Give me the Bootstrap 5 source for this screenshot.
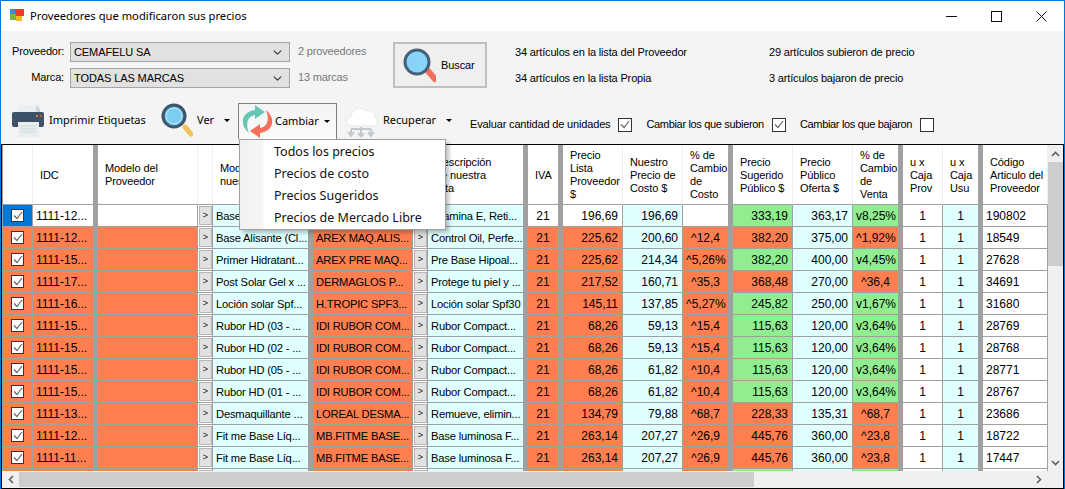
<!DOCTYPE html>
<html lang="es">
<head>
<meta charset="utf-8">
<title>Proveedores que modificaron sus precios</title>
<link rel="stylesheet" href="https://cdn.jsdelivr.net/npm/bootstrap@5.3.0/dist/css/bootstrap.min.css">
<style>
html,body{margin:0;width:1065px;height:489px;overflow:hidden;background:#f4f4f4}
body{font-family:"Liberation Sans",Arial,sans-serif;font-size:11px;letter-spacing:-.16px;color:#000;line-height:1.2}
.win{width:1065px;height:489px;border:1px solid #0078d7;border-bottom:0;position:relative;background:#f4f4f4}
.titlebar{height:30px;background:#fff;font-family:"Noto Sans",sans-serif;font-size:11.2px;letter-spacing:0}
.titlebar .ttl{margin-left:5px}
.appicon{margin-left:9px}
.capbtn{width:45px;height:30px}
.filters{height:57px;padding:11px 0 0 11px}
.lblcol{width:52px;text-align:right}
.frow{height:20px;margin-bottom:6px}
.form-select.cmb{width:220px;height:20px;min-height:0;margin-left:6px;padding:0 3px;font-size:11px;letter-spacing:-.1px;line-height:18px;color:#000;background-color:#e1e1e1;border:1px solid #a6a6a6;border-radius:0;background-position:right 6px center;background-size:11px 9px;font-family:"Liberation Sans",Arial,sans-serif}
.cnt{width:103px;padding-left:8px;color:#777}
.buscar{width:94px;height:46px;background:#efefef;border:2px solid #bfbfbf;border-radius:0;padding:0;font-size:11px;letter-spacing:-.1px;color:#000}
.buscar svg{margin-left:7px;margin-right:5px}
.stat1{width:254px;margin-left:28px}
.statline{height:26px;line-height:20px}
.tools{height:35px;margin-top:15px;font-family:"Noto Sans",sans-serif;font-size:11px;letter-spacing:0}
.titem{height:35px;padding-bottom:1px}
.ti-print{margin-left:11px;width:145px}
.ti-ver{width:77px;margin-left:4px}
.ti-cam{width:99px;background:linear-gradient(#f4f4f4,#fbfbfb);border:1px solid #808080;border-bottom:0;position:relative;z-index:1001;height:36px}
.ti-cam svg{margin-left:3px}
.ti-cam .lbl{margin-left:2px}
.ti-rec{width:115px;margin-left:8px}
.caret-d{width:0;height:0;border-left:3px solid transparent;border-right:3px solid transparent;border-top:3px solid #000;margin-left:auto}
.caret-e1{margin-right:6px}
.ti-chk{height:35px;padding-top:8px;margin-left:10px;font-family:"Liberation Sans",Arial,sans-serif;font-size:11px;letter-spacing:-.16px}
.ti-chk .chkbox{margin-left:8px;margin-right:14px}
.ti-chk .nar{letter-spacing:-.33px}
.chkbox{display:inline-flex;width:14px;height:14px;border:1px solid #333;background:#fff;align-items:center;justify-content:center;flex:none}
.frame{position:absolute;left:0;top:143px;width:1063px;height:345px;border:1px solid #000;background:#a0a0a0}
.gridrow{height:326px}
.gridwrap{width:1046px;height:326px;overflow:hidden;padding-left:1px;background:#a0a0a0}
.data-grid.table{width:1045px;table-layout:fixed;border-collapse:separate;border-spacing:0;font-size:12px;letter-spacing:0;margin:0}
.data-grid.table>:not(caption)>*>*{padding:1px 3px 0;border:0;border-right:1px solid #a0a0a0;border-bottom:1px solid #a0a0a0;height:22px;line-height:20px;white-space:nowrap;overflow:hidden;color:#000;background-color:#fff;box-shadow:none;vertical-align:middle}
.data-grid.table>thead>tr>th{height:60px;font-weight:400;font-size:11px;letter-spacing:-.1px;line-height:13px;white-space:nowrap;padding:1px 0 0 7px;border-right:1px solid #efefef;border-bottom:1px solid #a0a0a0}
.data-grid.table>thead>tr>th.sp,.data-grid.table>tbody>tr>td.sp{border-right:5px solid #a0a0a0}
.data-grid.table>tbody>tr>td.tx{font-size:11.2px;letter-spacing:-.18px}
.data-grid.table>tbody>tr>td.co{background-color:#ff7f50}
.data-grid.table>tbody>tr>td.cy{background-color:#e0ffff}
.data-grid.table>tbody>tr>td.gr{background-color:#90ee90}
.data-grid.table>tbody>tr>td.sel{background-color:#0078d7}
.data-grid.table>tbody>tr>td.pr{padding-right:4px}
.data-grid.table>tbody>tr>td.bt{padding:0 1px;background-color:#fff}
.data-grid.table>tbody>tr>td.ck{padding:0 0 0 8px}
.cellbtn{display:block;width:13px;height:19px;padding:0;border:1px solid #b5b5b5;background:#e1e1e1;font-size:9px;line-height:17px;color:#111;text-align:center}
.tick{display:flex;width:13px;height:13px;border:1px solid #333;background:#fff;align-items:center;justify-content:center}
.vscroll{width:15px;height:326px;background:#f0f0f0;position:relative}
.vscroll .up{height:17px}
.vscroll .thumb{height:104px;background:#cdcdcd}
.vscroll .sp-fill{height:188px}
.hscroll{height:17px;background:#f0f0f0;width:100%}
.hscroll .end{width:17px;height:17px}
.hscroll .thumb{width:735px;height:15px;background:#cdcdcd}
.dropdown-menu.ctx{left:238px;top:138px;width:207px;min-width:0;height:91px;padding:1px 0;margin:0;border:1px solid #a0a0a0;border-radius:0;background:linear-gradient(90deg,#f1f1f1 0,#f6f6f6 23px,#fff 24px);box-shadow:3px 3px 4px rgba(0,0,0,.25);font-family:"Noto Sans",sans-serif;color:#000;letter-spacing:0}
.dropdown-menu.ctx .dropdown-item{height:22px;line-height:22px;padding:0 0 0 34px;color:#111;font-size:12.5px}
</style>
</head>
<body>
<div class="win">
  <div class="titlebar d-flex align-items-center">
    <svg class="appicon" width="15" height="14" viewBox="0 0 15 14"><rect x="0" y="0" width="6" height="5" fill="#3d90cf"/><rect x="5" y="0" width="9" height="7" fill="#ea3b26"/><rect x="0" y="5" width="6" height="6" fill="#7db43c"/><rect x="6" y="7" width="6" height="5" fill="#f5b924"/></svg>
    <span class="ttl">Proveedores que modificaron sus precios</span>
    <div class="ms-auto d-flex">
      <div class="capbtn d-flex align-items-center justify-content-center"><svg width="11" height="11"><path d="M0 5.5H11" stroke="#111"/></svg></div>
      <div class="capbtn d-flex align-items-center justify-content-center"><svg width="11" height="11"><rect x=".5" y=".5" width="10" height="10" fill="none" stroke="#111"/></svg></div>
      <div class="capbtn d-flex align-items-center justify-content-center"><svg width="11" height="11"><path d="M.5 .5L10.5 10.5M10.5 .5L.5 10.5" stroke="#111"/></svg></div>
    </div>
  </div>

  <div class="filters d-flex align-items-start">
    <div>
      <div class="frow d-flex align-items-center">
        <div class="lblcol">Proveedor:</div>
        <select class="form-select cmb"><option>CEMAFELU SA</option></select>
        <div class="cnt">2 proveedores</div>
      </div>
      <div class="frow d-flex align-items-center">
        <div class="lblcol">Marca:</div>
        <select class="form-select cmb"><option>TODAS LAS MARCAS</option></select>
        <div class="cnt">13 marcas</div>
      </div>
    </div>
    <button class="btn buscar d-flex align-items-center" type="button">
      <svg width="34" height="36" viewBox="0 0 34 36"><path d="M26 24L33 32" stroke="#f0705a" stroke-width="6" stroke-linecap="round"/><circle cx="15" cy="15" r="12" fill="#87d4f8" stroke="#44607a" stroke-width="3"/></svg>
      <span>Buscar</span>
    </button>
    <div class="stat1">
      <div class="statline">34 artículos en la lista del Proveedor</div>
      <div class="statline">34 artículos en la lista Propia</div>
    </div>
    <div>
      <div class="statline">29 artículos subieron de precio</div>
      <div class="statline">3 artículos bajaron de precio</div>
    </div>
  </div>

  <div class="tools d-flex align-items-start">
    <div class="titem ti-print d-flex align-items-center">
      <svg width="33" height="33" viewBox="0 0 33 33"><rect x="6" y="1" width="22" height="12" fill="#eceff1"/><path d="M24 1L28 5V8H24Z" fill="#cfd5d9"/><rect x="0" y="8" width="32" height="15" rx="2" fill="#3d5266"/><circle cx="25" cy="12" r="1" fill="#e9a23b"/><circle cx="29" cy="12" r="1" fill="#e0573f"/><rect x="6" y="18" width="21" height="15" fill="#e8eef0"/><path d="M9 22H24M9 25H24M9 28H24" stroke="#ccd6da"/></svg>
      <span class="ms-1">Imprimir Etiquetas</span>
    </div>
    <div class="titem ti-ver d-flex align-items-center">
      <svg width="32" height="35" viewBox="0 0 32 35"><path d="M24 24L30 31" stroke="#f4c25c" stroke-width="5" stroke-linecap="round"/><circle cx="13" cy="13" r="11" fill="#5ab8ea" stroke="#3f5568" stroke-width="3"/><circle cx="13" cy="13" r="8" fill="#7ccdf2" stroke="#cfeaf7" stroke-width="1"/></svg>
      <span class="ms-1">Ver</span><span class="caret-d me-2"></span>
    </div>
    <div class="titem ti-cam d-flex align-items-center">
      <svg width="31" height="33" viewBox="0 0 31 33"><path d="M7 28C-3 20-1 7 13 5L13 0L23 7L13 14L13 10C6 11 3 18 7 28Z" fill="#66c7b5"/><path d="M7 28C-3 20-1 7 13 5L13 0L23 7L13 14L13 10C6 11 3 18 7 28Z" fill="#f2705c" transform="rotate(180 15.5 16.5)"/></svg>
      <span class="lbl">Cambiar</span><span class="caret-d caret-e1"></span>
    </div>
    <div class="titem ti-rec d-flex align-items-center">
      <svg width="34" height="33" viewBox="0 0 34 33"><path d="M7 22C0 22 0 13 6 12C7 5 16 1 21 7C28 5 31 10 29 13C34 14 33 22 28 22Z" fill="#fff" stroke="#e6e8ea"/><path d="M6 25V31M3 28L6 32L9 28M16 23V32M13 29L16 33L19 29M26 25V31M23 28L26 32L29 28M6 25H26" fill="none" stroke="#c4c9ce" stroke-width="2"/></svg>
      <span class="ms-1">Recuperar</span><span class="caret-d me-2"></span>
    </div>
    <div class="ti-chk d-flex align-items-center">
      <span>Evaluar cantidad de unidades</span>
      <span class="chkbox"><svg width="10" height="9" viewBox="0 0 10 9"><path d="M1 4.5L4 7.5L9 1" fill="none" stroke="#666" stroke-width="1.2"/></svg></span>
      <span class="nar">Cambiar los que subieron</span>
      <span class="chkbox"><svg width="10" height="9" viewBox="0 0 10 9"><path d="M1 4.5L4 7.5L9 1" fill="none" stroke="#666" stroke-width="1.2"/></svg></span>
      <span class="nar">Cambiar los que bajaron</span>
      <span class="chkbox"></span>
    </div>
  </div>

  <div class="dropdown-menu show ctx">
    <a class="dropdown-item" href="#">Todos los precios</a>
    <a class="dropdown-item" href="#">Precios de costo</a>
    <a class="dropdown-item" href="#">Precios Sugeridos</a>
    <a class="dropdown-item" href="#">Precios de Mercado Libre</a>
  </div>

  <div class="frame">
    <div class="gridrow d-flex">
      <div class="gridwrap">
        <table class="table data-grid">
          <colgroup><col style="width:30px"><col style="width:65px"><col style="width:100px"><col style="width:15px"><col style="width:100px"><col style="width:100px"><col style="width:15px"><col style="width:100px"><col style="width:35px"><col style="width:60px"><col style="width:60px"><col style="width:50px"><col style="width:60px"><col style="width:60px"><col style="width:50px"><col style="width:40px"><col style="width:40px"><col style="width:65px"></colgroup>
          <thead><tr>
            <th></th><th class="sp">IDC</th><th>Modelo del<br>Proveedor</th><th></th><th class="sp">Modelo de<br>nuestra lista</th><th></th><th></th><th class="sp">Descripción<br>de nuestra<br>lista</th><th class="sp">IVA</th><th>Precio<br>Lista<br>Proveedor<br>$</th><th>Nuestro<br>Precio de<br>Costo $</th><th class="sp">% de<br>Cambio<br>de<br>Costo</th><th>Precio<br>Sugerido<br>Público $</th><th>Precio<br>Público<br>Oferta $</th><th class="sp">% de<br>Cambio<br>de<br>Venta</th><th>u x<br>Caja<br>Prov</th><th class="sp">u x<br>Caja<br>Usu</th><th>Código<br>Articulo del<br>Proveedor</th>
          </tr></thead>
          <tbody id="gb"></tbody>
        </table>
      </div>
      <div class="vscroll">
        <div class="up d-flex align-items-center justify-content-center"><svg width="9" height="6"><path d="M1 5L4.5 1.5L8 5" fill="none" stroke="#606060" stroke-width="1.6"/></svg></div>
        <div class="thumb"></div>
        <div class="sp-fill"></div>
        <div class="up d-flex align-items-center justify-content-center"><svg width="9" height="6"><path d="M1 1L4.5 4.5L8 1" fill="none" stroke="#606060" stroke-width="1.6"/></svg></div>
      </div>
    </div>
    <div class="hscroll d-flex align-items-center">
      <div class="end d-flex align-items-center justify-content-center"><svg width="6" height="9"><path d="M5 1L1.5 4.5L5 8" fill="none" stroke="#606060" stroke-width="1.6"/></svg></div>
      <div class="thumb"></div>
      <div class="end d-flex align-items-center justify-content-center ms-auto me-3"><svg width="6" height="9"><path d="M1 1L4.5 4.5L1 8" fill="none" stroke="#606060" stroke-width="1.6"/></svg></div>
    </div>
  </div>
</div>
<script>
var T='<svg width="10" height="9" viewBox="0 0 10 9"><path d="M1 4.5L4 7.5L9 1" fill="none" stroke="#666" stroke-width="1.2"/></svg>';
var R=[
["12","Base...","","Vitamina E, Reti...","196,69","196,69","","333,19","363,17","v8,25%","190802",1],
["12","Base Alisante (Cl...","AREX MAQ.ALIS...","Control Oil, Perfe...","225,62","200,60","^12,4","382,20","375,00","^1,92%","18549",0],
["15","Primer Hidratant...","AREX PRE MAQ...","Pre Base Hipoal...","225,62","214,34","^5,26%","382,20","400,00","v4,45%","27628",0],
["17","Post Solar Gel x ...","DERMAGLOS P...","Protege tu piel y ...","217,52","160,71","^35,3","368,48","270,00","^36,4","34691",0],
["16","Loción solar Spf...","H.TROPIC SPF3...","Loción solar Spf30","145,11","137,85","^5,27%","245,82","250,00","v1,67%","31680",0],
["15","Rubor HD (03 - ...","IDI RUBOR COM...","Rubor Compact...","68,26","59,13","^15,4","115,63","120,00","v3,64%","28769",0],
["15","Rubor HD (02 - ...","IDI RUBOR COM...","Rubor Compact...","68,26","59,13","^15,4","115,63","120,00","v3,64%","28768",0],
["15","Rubor HD (05 - ...","IDI RUBOR COM...","Rubor Compact...","68,26","61,82","^10,4","115,63","120,00","v3,64%","28771",0],
["15","Rubor HD (01 - ...","IDI RUBOR COM...","Rubor Compact...","68,26","61,82","^10,4","115,63","120,00","v3,64%","28767",0],
["13","Desmaquillante ...","LOREAL DESMA...","Remueve, elimin...","134,79","79,88","^68,7","228,33","135,31","^68,7","23686",0],
["12","Fit me Base Líq...","MB.FITME BASE...","Base luminosa F...","263,14","207,27","^26,9","445,76","360,00","^23,8","18722",0],
["11","Fit me Base Líq...","MB.FITME BASE...","Base luminosa F...","263,14","207,27","^26,9","445,76","360,00","^23,8","17447",0],
["","","","","","","","","","v","",0]];
var h="";
R.forEach(function(r,i){
 var f=r[11],b=f?"":"co",v=r[9].charAt(0)=="v"?"gr":"co",cut=i==12;
 var idc=cut?"":"1111-"+r[0]+"...";
 var iva=cut?"":"21",one=cut?"":"1";
 var vv=cut?"":r[9];
 h+='<tr><td class="ck '+(f?"sel":"co")+'"><span class="tick">'+T+'</span></td>'
 +'<td class="sp '+(f?"":"co")+'">'+idc+'</td><td class="'+b+'"></td>'
 +'<td class="bt"><span class="cellbtn">&gt;</span></td><td class="sp cy tx">'+r[1]+'</td>'
 +'<td class="co tx">'+r[2]+'</td><td class="bt"><span class="cellbtn">&gt;</span></td><td class="sp cy tx">'+r[3]+'</td>'
 +'<td class="sp text-center '+b+'">'+iva+'</td><td class="text-end pr '+b+'">'+r[4]+'</td>'
 +'<td class="text-end pr cy">'+r[5]+'</td><td class="sp text-center '+b+'">'+r[6]+'</td>'
 +'<td class="text-end pr '+v+'">'+r[7]+'</td><td class="text-end pr cy">'+r[8]+'</td>'
 +'<td class="sp text-center '+v+'">'+vv+'</td><td class="text-center">'+one+'</td>'
 +'<td class="sp text-center cy">'+one+'</td><td>'+r[10]+'</td></tr>';
});
document.getElementById("gb").innerHTML=h;
</script>
<script src="https://cdn.jsdelivr.net/npm/bootstrap@5.3.0/dist/js/bootstrap.bundle.min.js"></script>
</body>
</html>
